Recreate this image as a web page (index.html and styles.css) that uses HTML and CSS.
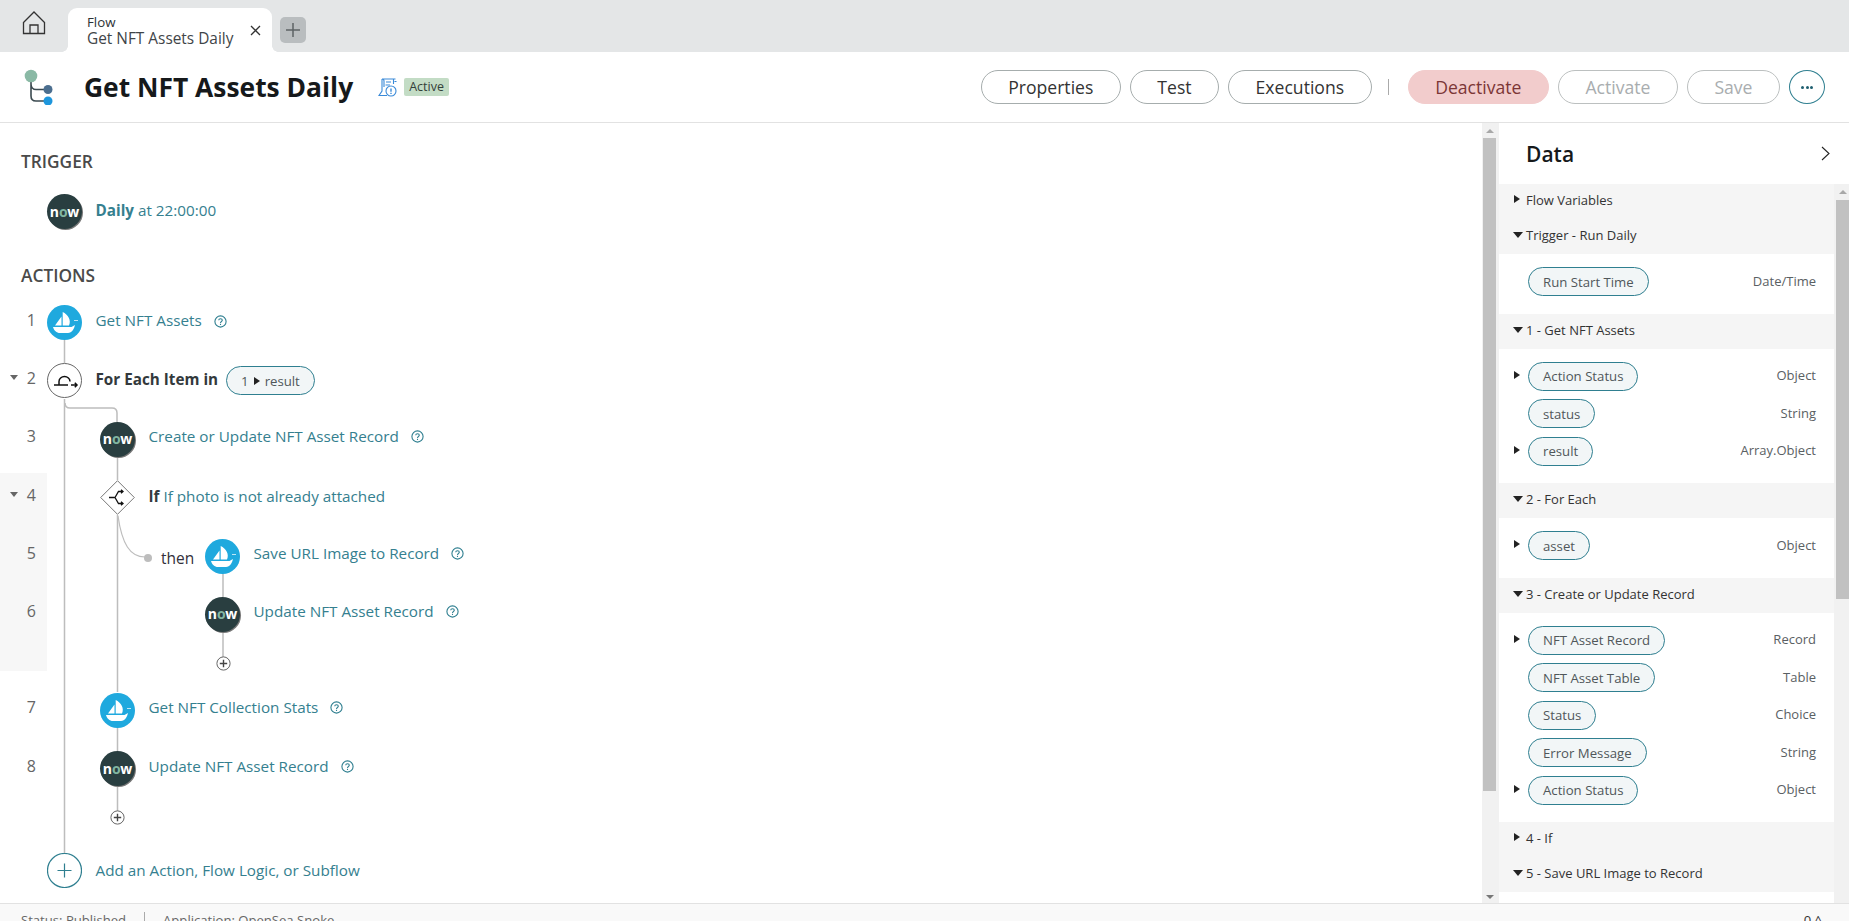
FILE: index.html
```html
<!DOCTYPE html>
<html lang="en">
<head>
<meta charset="utf-8">
<title>Get NFT Assets Daily</title>
<link rel="stylesheet" href="styles.css">
</head>
<body>
<svg class="defs" width="0" height="0" aria-hidden="true">
  <defs>
    <symbol id="boat" viewBox="0 0 35 35">
      <circle cx="17.500" cy="17.500" r="17.500" fill="#1fa9de"/>
      <path fill="#fff" d="M8 20.500 14.500 11.500V20.500ZM15.700 7C21 9.500 24.500 15 22 20.500H15.700ZM6 22H24.500L28 20C27 24 25 28 21 28H13C9.500 28 7 25.500 6 22Z"/>
      <path stroke="#bfe6f5" stroke-width="1" fill="none" d="M27 15.500H31"/>
    </symbol>
    <symbol id="help" viewBox="0 0 13 13">
      <circle cx="6.500" cy="6.500" r="5.600" fill="none" stroke="#2f7f90" stroke-width="1.100"/>
      <path fill="none" stroke="#2f7f90" stroke-width="1.100" d="M4.700 5.200C4.800 3.200 8.300 3.200 8.300 5.200C8.300 6.500 6.500 6.400 6.500 7.900"/>
      <path stroke="#2f7f90" stroke-width="1.100" d="M6.500 8.800V10"/>
    </symbol>
    <symbol id="plus" viewBox="0 0 15 15">
      <circle cx="7.500" cy="7.500" r="6.600" fill="#fff" stroke="#666" stroke-width="1"/>
      <path stroke="#444" stroke-width="1.400" d="M7.500 3.800V11.200M3.800 7.500H11.200"/>
    </symbol>
  </defs>
</svg>

<nav class="tabbar">
  <div class="home">
    <svg width="24" height="24" viewBox="0 0 24 24" fill="none" stroke="#333" stroke-width="1.300"><path d="M1.500 11.500 12 1 22.500 11.500M1.500 11V22.500H22.500V11M8 22.500V14H16V22.500"/></svg>
  </div>
  <div class="tab">
    <div class="tab-text">
      <div class="tab-kind">Flow</div>
      <div class="tab-name">Get NFT Assets Daily</div>
    </div>
    <svg class="tab-close" width="11" height="11" viewBox="0 0 11 11" stroke="#333" stroke-width="1.300"><path d="M1 1 10 10M10 1 1 10"/></svg>
  </div>
  <div class="tab-add">
    <svg width="14" height="14" viewBox="0 0 14 14" stroke="#5d6366" stroke-width="1.500"><path d="M7 0V14M0 7H14"/></svg>
  </div>
</nav>

<header class="header">
  <svg class="flow-logo" width="34" height="36" viewBox="0 0 34 36" fill="none">
    <path d="M7 8V27C7 30 9 32 12 32H20M7 15C7 18 9 20.500 12 20.500H20" stroke="#3b4a50" stroke-width="1.600"/>
    <circle cx="7" cy="7" r="6.300" fill="#8ab9a5"/>
    <circle cx="24" cy="20.500" r="4.500" fill="#4b6e8f"/>
    <circle cx="24" cy="32" r="4.500" fill="#1e96dc"/>
  </svg>
  <h1 class="title">Get NFT Assets Daily</h1>
  <svg class="doc-icon" width="19" height="19" viewBox="0 0 19 19" fill="none" stroke="#3a8ad8" stroke-width="1.100">
    <path d="M4 1H17.500M4 1C5.500 1 6 2 6 3V9M4 1V13L1 17.500H9M15.500 1V6M16.500 3.500H18.500"/>
    <path d="M8 4H13M7.500 7H12"/>
    <circle cx="13" cy="13" r="5"/>
    <path d="M13 10.500V13.800M13 14.800V16" stroke-width="1.400"/>
  </svg>
  <span class="badge">Active</span>
  <div class="actions">
    <button class="btn">Properties</button>
    <button class="btn">Test</button>
    <button class="btn">Executions</button>
    <span class="divider"></span>
    <button class="btn btn-danger">Deactivate</button>
    <button class="btn btn-off">Activate</button>
    <button class="btn btn-off">Save</button>
    <button class="btn-more" aria-label="More"><span></span><span></span><span></span></button>
  </div>
</header>

<main class="main">
  <section class="canvas">
    <svg class="wires" width="480" height="780" viewBox="0 123 480 780" fill="none" stroke="#bdbdbd" stroke-width="1.500">
      <rect x="0" y="473" width="47" height="198" fill="#f7f7f7" stroke="none"/>
      <path d="M64.500 340V363M64.500 399V853"/>
      <path d="M65 403C65 406 67 408 70 408H112C115 408 117 410 117 413V422"/>
      <path d="M117.500 457V480M117.500 515V692M117.500 727V751M117.500 786V811"/>
      <path d="M118 516C122 544 130 557 145 557" stroke-width="1.200"/>
      <circle cx="148" cy="558" r="4" fill="#bdbdbd" stroke="none"/>
      <path d="M223 573V597M223 632V657"/>
    </svg>

    <div class="flow">
      <h2 class="flow-head">TRIGGER</h2>
      <div class="row row-last">
        <span class="num"></span>
        <span class="node now">n<i>o</i>w</span>
        <span class="label label-mid"><b class="link-bold">Daily</b> at 22:00:00</span>
      </div>

      <h2 class="flow-head flow-head-actions">ACTIONS</h2>
      <div class="row">
        <span class="num">1</span>
        <svg class="node"><use href="#boat"/></svg>
        <span class="label">Get NFT Assets</span>
        <svg class="help help-mid"><use href="#help"/></svg>
      </div>
      <div class="row">
        <span class="num"><i class="caret"></i>2</span>
        <svg class="node" viewBox="0 0 35 35" fill="none" stroke="#111" stroke-width="1.500">
          <circle cx="17.500" cy="17.500" r="17" fill="#fff" stroke="#666" stroke-width="1"/>
          <path d="M7 22H21M12 21.500V18.500A5.500 5 0 0 1 23 18.500M24 22H30M27.800 19.800 30 22 27.800 24.200"/>
        </svg>
        <span class="label label-strong label-mid">For Each Item in</span>
        <span class="pill pill-flow">1 <i class="tri"></i> result</span>
      </div>
      <div class="row l1">
        <span class="num">3</span>
        <span class="node now">n<i>o</i>w</span>
        <span class="label">Create or Update NFT Asset Record</span>
        <svg class="help"><use href="#help"/></svg>
      </div>
      <div class="row l1">
        <span class="num"><i class="caret"></i>4</span>
        <svg class="node" viewBox="0 0 35 35" fill="none" stroke="#111" stroke-width="1.300">
          <path d="M17.500 .7 34.300 17.500 17.500 34.300 .7 17.500Z" fill="#fff" stroke="#777" stroke-width="1"/>
          <path d="M9 17.500H15M15 17.500 18.500 11.500H23M15 17.500 18.500 23.500H23M21 9.800 23 11.500 21 13.200M21 21.800 23 23.500 21 25.200"/>
        </svg>
        <span class="label label-mid"><b class="label-if">If</b> If photo is not already attached</span>
      </div>
      <div class="row">
        <span class="num">5</span>
        <span class="then">then</span>
        <svg class="node"><use href="#boat"/></svg>
        <span class="label">Save URL Image to Record</span>
        <svg class="help"><use href="#help"/></svg>
      </div>
      <div class="row l2 row-tight">
        <span class="num">6</span>
        <span class="node now">n<i>o</i>w</span>
        <span class="label">Update NFT Asset Record</span>
        <svg class="help"><use href="#help"/></svg>
      </div>
      <svg class="add-small add-l2"><use href="#plus"/></svg>
      <div class="row l1">
        <span class="num">7</span>
        <svg class="node"><use href="#boat"/></svg>
        <span class="label">Get NFT Collection Stats</span>
        <svg class="help"><use href="#help"/></svg>
      </div>
      <div class="row l1 row-tight">
        <span class="num">8</span>
        <span class="node now">n<i>o</i>w</span>
        <span class="label">Update NFT Asset Record</span>
        <svg class="help"><use href="#help"/></svg>
      </div>
      <svg class="add-small add-l1"><use href="#plus"/></svg>
      <div class="row row-last">
        <span class="num"></span>
        <svg class="node" viewBox="0 0 35 35" fill="none" stroke="#2f7f90" stroke-width="1.200">
          <circle cx="17.500" cy="17.500" r="17" fill="#fff"/>
          <path d="M17.500 10.500V24.500M10.500 17.500H24.500"/>
        </svg>
        <span class="label label-flat">Add an Action, Flow Logic, or Subflow</span>
      </div>
    </div>
  </section>

  <div class="scrollbar scrollbar-canvas">
    <i class="arrow-up"></i>
    <div class="thumb"></div>
    <i class="arrow-down"></i>
  </div>

  <aside class="panel">
    <div class="panel-head">
      <h2 class="panel-title">Data</h2>
      <svg width="9" height="15" viewBox="0 0 9 15" fill="none" stroke="#222" stroke-width="1.100"><path d="M1 1 8 7.500 1 14"/></svg>
    </div>
    <div class="panel-body">
      <div class="tree">
        <div class="sec"><i class="tri"></i>Flow Variables</div>
        <div class="sec"><i class="tri-down"></i>Trigger - Run Daily</div>
        <div class="sec-body">
          <div class="var"><span class="pill">Run Start Time</span><span class="type">Date/Time</span></div>
        </div>
        <div class="sec"><i class="tri-down"></i>1 - Get NFT Assets</div>
        <div class="sec-body">
          <div class="var"><i class="tri tri-var"></i><span class="pill">Action Status</span><span class="type">Object</span></div>
          <div class="var"><span class="pill">status</span><span class="type">String</span></div>
          <div class="var"><i class="tri tri-var"></i><span class="pill">result</span><span class="type">Array.Object</span></div>
        </div>
        <div class="sec"><i class="tri-down"></i>2 - For Each</div>
        <div class="sec-body">
          <div class="var"><i class="tri tri-var"></i><span class="pill">asset</span><span class="type">Object</span></div>
        </div>
        <div class="sec"><i class="tri-down"></i>3 - Create or Update Record</div>
        <div class="sec-body">
          <div class="var"><i class="tri tri-var"></i><span class="pill">NFT Asset Record</span><span class="type">Record</span></div>
          <div class="var"><span class="pill">NFT Asset Table</span><span class="type">Table</span></div>
          <div class="var"><span class="pill">Status</span><span class="type">Choice</span></div>
          <div class="var"><span class="pill">Error Message</span><span class="type">String</span></div>
          <div class="var"><i class="tri tri-var"></i><span class="pill">Action Status</span><span class="type">Object</span></div>
        </div>
        <div class="sec"><i class="tri"></i>4 - If</div>
        <div class="sec"><i class="tri-down"></i>5 - Save URL Image to Record</div>
      </div>
      <div class="scrollbar scrollbar-panel">
        <i class="arrow-up"></i>
        <div class="thumb"></div>
      </div>
    </div>
  </aside>
</main>

<footer class="status">
  <span>Status: Published</span>
  <span class="status-sep"></span>
  <span>Application: OpenSea Snoke</span>
  <span class="status-right">0 ^</span>
</footer>
</body>
</html>
```

FILE: styles.css
```css
* { box-sizing: border-box; }

html, body { height: 100%; }

body {
  margin: 0;
  height: 921px;
  overflow: hidden;
  display: flex;
  flex-direction: column;
  background: #fff;
  color: #333;
  font-family: "Open Sans", "Liberation Sans", sans-serif;
  font-size: 14px;
}

.defs { position: absolute; }

i { font-style: normal; }

/* Tab bar */
.tabbar {
  flex: 0 0 52px;
  display: flex;
  align-items: flex-end;
  background: #e4e6e7;
}

.home {
  width: 68px;
  height: 52px;
  display: flex;
  align-items: center;
  padding: 0 0 6px 22px;
}

.tab {
  position: relative;
  width: 204px;
  height: 44px;
  display: flex;
  align-items: center;
  padding: 0 11px 0 19px;
  background: #fff;
  border-radius: 9px 9px 0 0;
}

.tab::before,
.tab::after {
  content: "";
  position: absolute;
  bottom: 0;
  width: 6px;
  height: 6px;
}

.tab::before {
  left: -6px;
  background: radial-gradient(circle at 0 0, #e4e6e7 5.500px, #fff 6px);
}

.tab::after {
  right: -6px;
  background: radial-gradient(circle at 100% 0, #e4e6e7 5.500px, #fff 6px);
}

.tab-text { flex: 1; }
.tab-kind { font-size: 13.300px; line-height: 16px; margin-top: 1px; color: #2c3336; }
.tab-name { font-size: 15.400px; line-height: 18px; color: #3f4548; white-space: nowrap; }

.tab-add {
  width: 26px;
  height: 26px;
  margin: 0 0 9px 8px;
  display: flex;
  align-items: center;
  justify-content: center;
  background: #b9bdbf;
  border-radius: 5px;
}

/* Header */
.header {
  flex: 0 0 71px;
  display: flex;
  align-items: center;
  padding: 0 24px;
  border-bottom: 1px solid #e2e2e2;
}

.flow-logo { margin: 0 26px 0 0; }

.title {
  margin: 0 25px 0 0;
  font-size: 26.400px;
  font-weight: 700;
  color: #16191b;
  white-space: nowrap;
}

.doc-icon { margin-right: 7px; }

.badge {
  height: 18px;
  padding: 0 5px;
  font-size: 12.500px;
  line-height: 18px;
  color: #33403a;
  background: #c3dcc5;
  border-radius: 2px;
}

.actions {
  margin-left: auto;
  display: flex;
  align-items: center;
  gap: 9px;
}

.btn {
  height: 34px;
  padding: 0 26.500px;
  font: 17.600px "Open Sans", "Liberation Sans", sans-serif;
  color: #333;
  background: #fff;
  border: 1px solid #a6adad;
  border-radius: 17px;
}

.btn-danger { background: #f2cccc; border-color: #f2cccc; color: #7c3636; }
.btn-off { color: #a9adaf; border-color: #bcc0c0; }

.divider {
  width: 1px;
  height: 16px;
  margin: 0 10px 0 7px;
  background: #aaa;
}

.btn-more {
  width: 36px;
  height: 34px;
  padding: 0;
  display: flex;
  align-items: center;
  justify-content: center;
  gap: 1.500px;
  background: #fff;
  border: 1px solid #2f7f90;
  border-radius: 50%;
}

.btn-more span {
  width: 3px;
  height: 3px;
  border-radius: 50%;
  background: #1f5f70;
}

/* Main */
.main {
  flex: 0 0 780px;
  display: flex;
  min-height: 0;
}

.canvas {
  position: relative;
  width: 1482px;
  overflow: hidden;
}

.wires {
  position: absolute;
  left: 0;
  top: 0;
}

.flow {
  position: relative;
  padding-top: 28px;
}

.flow-head {
  margin: 0 0 21px 21px;
  font-size: 17.300px;
  font-weight: 600;
  line-height: 22px;
  color: #4a4a4a;
}

.flow-head-actions { margin-top: 36px; margin-bottom: 18px; }

.row {
  display: flex;
  align-items: center;
  height: 35px;
  margin-bottom: 23.400px;
}

.row-tight { margin-bottom: 24px; }
.row-last { margin-bottom: 0; }

.num {
  flex: 0 0 47px;
  display: flex;
  align-items: center;
  justify-content: flex-end;
  padding-right: 11px;
  margin-top: -6px;
  font-size: 16px;
  color: #666;
  white-space: nowrap;
}

.caret {
  width: 0;
  height: 0;
  margin-right: 9px;
  border-left: 4px solid transparent;
  border-right: 4px solid transparent;
  border-top: 5px solid #666;
}

.node {
  flex: 0 0 35px;
  width: 35px;
  height: 35px;
}

.now {
  display: flex;
  align-items: center;
  justify-content: center;
  font-size: 14px;
  font-weight: 700;
  line-height: 1;
  letter-spacing: -.2px;
  color: #fff;
  background: #293e40;
  border-radius: 50%;
  box-shadow: 1px 1px 0 #777;
}

.now i { color: #81b5a1; }

.l1 .node { margin-left: 53px; }
.l2 .node { margin-left: 158px; }

.then {
  flex: 0 0 44px;
  margin: 4px 0 0 114px;
  font-size: 15.500px;
  color: #33303a;
}

.label {
  margin: -6px 0 0 13.500px;
  font-size: 15.250px;
  color: #35808f;
  white-space: nowrap;
}

.label-mid { margin-top: -4px; }
.label-flat { margin-top: -2px; }
.label-strong { font-weight: 700; color: #33393c; }
.label-if { font-weight: 700; color: #33393c; }
.link-bold { font-weight: 700; color: #35808f; }

.help {
  flex: 0 0 13px;
  width: 13px;
  height: 13px;
  margin: -5px 0 0 12px;
}

.help-mid { margin-top: -3px; }

.add-small {
  display: block;
  width: 15px;
  height: 15px;
}

.add-l2 { margin: 0 0 22px 215.500px; }
.add-l1 { margin: 0 0 28px 109.500px; }

/* Pills */
.pill {
  display: inline-flex;
  align-items: center;
  height: 29px;
  padding: 0 14px;
  font-size: 13.200px;
  color: #50575a;
  background: #f2f6f7;
  border: 1px solid #2f7f90;
  border-radius: 14.500px;
  white-space: nowrap;
}

.pill-flow { margin-left: 8px; }
.pill-flow .tri { margin: 0 5px; border-left-color: #222; }

.tri {
  display: inline-block;
  width: 0;
  height: 0;
  border-top: 4.500px solid transparent;
  border-bottom: 4.500px solid transparent;
  border-left: 6px solid #222;
}

.tri-down {
  display: inline-block;
  width: 0;
  height: 0;
  border-left: 5px solid transparent;
  border-right: 5px solid transparent;
  border-top: 6px solid #222;
}

/* Scrollbars */
.scrollbar {
  display: flex;
  flex-direction: column;
  align-items: center;
  background: #f1f1f1;
}

.scrollbar-canvas {
  flex: 0 0 17px;
  width: 17px;
  padding: 6px 3px 4px 1px;
}

.scrollbar-canvas .thumb { width: 13px; height: 653px; margin-top: 5px; margin-bottom: auto; }

.scrollbar-panel {
  flex: 0 0 15px;
  padding: 6px 0 0 2px;
}

.scrollbar-panel .thumb { width: 13px; height: 399px; margin-top: 6px; }

.thumb { background: #c1c1c1; }

.arrow-up, .arrow-down {
  width: 0;
  height: 0;
  border-left: 4px solid transparent;
  border-right: 4px solid transparent;
}

.arrow-up { border-bottom: 4px solid #a8a8a8; }
.arrow-down { border-top: 4px solid #777; }

/* Data panel */
.panel {
  flex: 1;
  min-width: 0;
  display: flex;
  flex-direction: column;
}

.panel-head {
  flex: 0 0 61px;
  display: flex;
  align-items: center;
  justify-content: space-between;
  padding: 0 19px 0 27px;
}

.panel-title {
  margin: 0;
  font-size: 21px;
  font-weight: 600;
  color: #16191b;
}

.panel-body {
  flex: 1;
  min-height: 0;
  display: flex;
}

.tree {
  flex: 1;
  min-width: 0;
  overflow: hidden;
}

.sec {
  position: relative;
  height: 35px;
  display: flex;
  align-items: center;
  padding: 0 0 3px 27px;
  font-size: 13px;
  color: #333;
  background: #f5f5f5;
}

.sec .tri-down {
  position: absolute;
  left: 14px;
  top: 13px;
}

.sec .tri {
  position: absolute;
  left: 15px;
  top: 11px;
}

.sec-body {
  padding: 13px 18px 17.500px 29px;
  display: flex;
  flex-direction: column;
  gap: 8.500px;
}

.var {
  position: relative;
  display: flex;
  align-items: center;
  justify-content: space-between;
}

.tri-var { position: absolute; left: -14px; top: 9px; }

.type { margin-top: -2px; font-size: 13px; color: #5a6063; }

/* Status bar */
.status {
  flex: 1;
  min-height: 0;
  display: flex;
  gap: 18px;
  padding: 8px 27px 0 21px;
  font-size: 13.100px;
  line-height: 17px;
  color: #666;
  background: #f9f9f9;
  border-top: 1px solid #e2e2e2;
}

.status-sep {
  width: 1px;
  height: 12px;
  flex: none;
  background: #aaa;
}

.status-right { margin-left: auto; color: #333; }
```
